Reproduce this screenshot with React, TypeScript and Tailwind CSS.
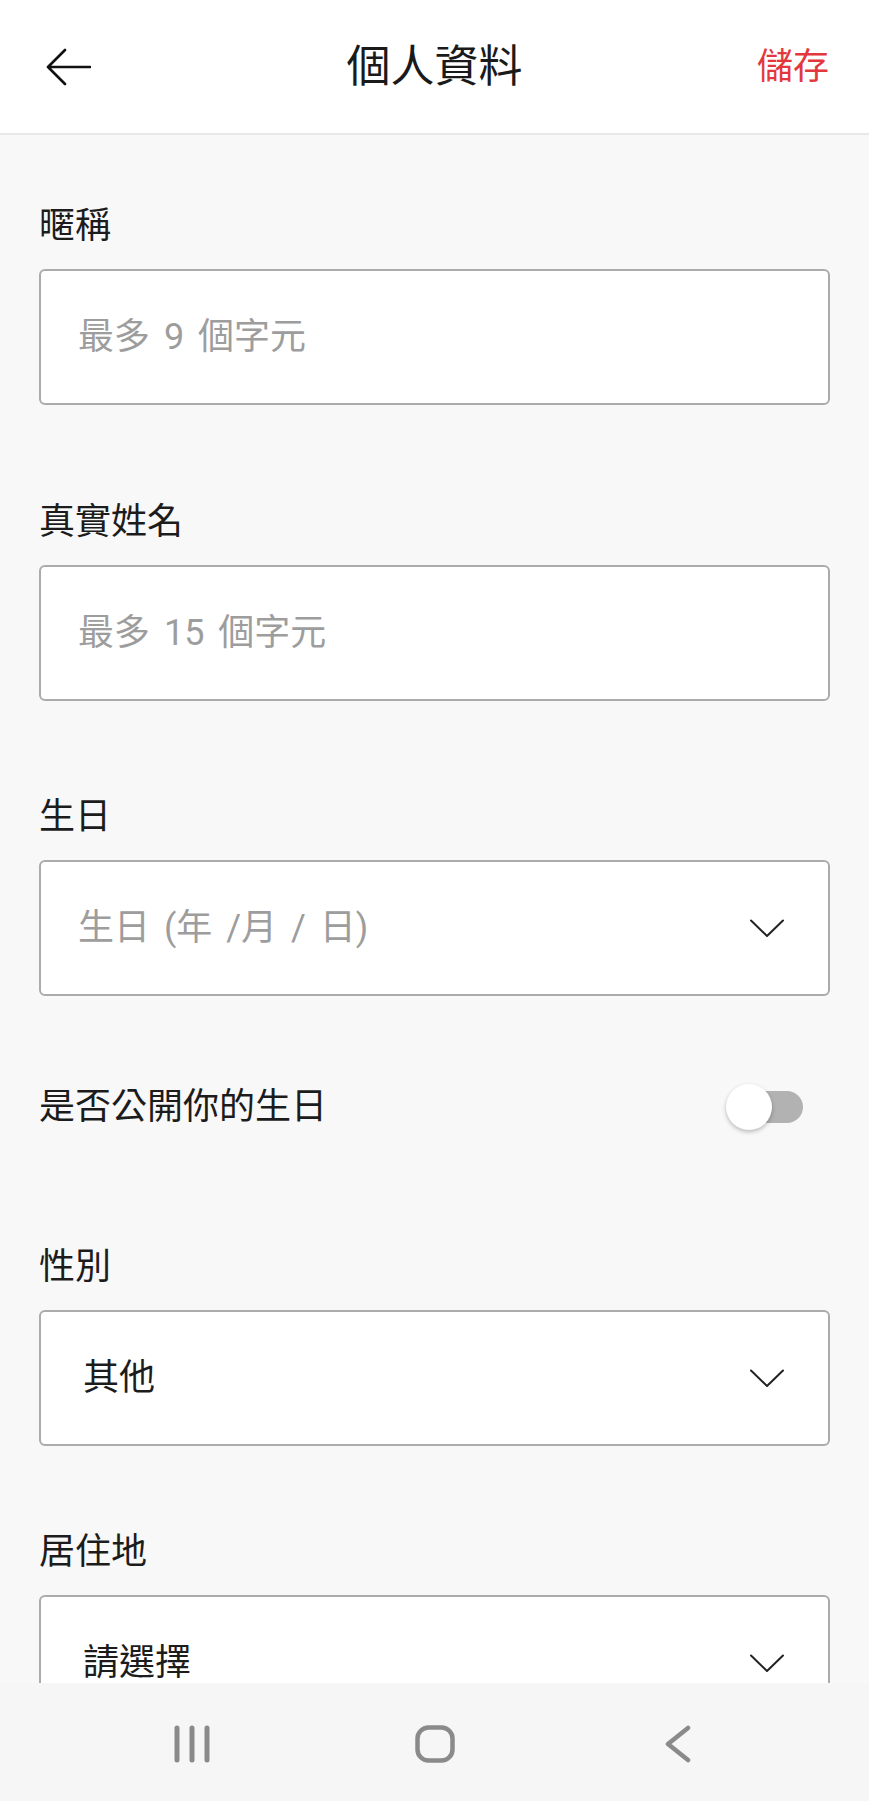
import { ReactNode } from 'react';

const font = "font-['Roboto','Noto_Sans_CJK_TC',sans-serif]";

function Chevron() {
  return (
    <svg width="34" height="19" viewBox="0 0 34 19" fill="none">
      <path d="M1 1.5 L17 17 L33 1.5" stroke="#222" strokeWidth="2" strokeLinecap="round" strokeLinejoin="round" />
    </svg>
  );
}

function Label({ children, className = '' }: { children: ReactNode; className?: string }) {
  return <p className={`h-[50px] text-[36px] leading-[50px] text-[#1c1c1c] ${className}`}>{children}</p>;
}

function TextBox({ placeholder }: { placeholder: string }) {
  return (
    <div className="mt-[18px] flex h-[136px] items-center rounded-[6px] border-2 border-[#ababab] bg-white px-[37px]">
      <span className="text-[36px] text-[#9d9d9d] [word-spacing:5px]">{placeholder}</span>
    </div>
  );
}

function SelectBox({ value, muted }: { value: string; muted?: boolean }) {
  return (
    <div className="mt-[18px] flex h-[136px] items-center justify-between rounded-[6px] border-2 border-[#ababab] bg-white pl-[37px] pr-[44px]">
      <span
        className={
          muted
            ? 'text-[36px] text-[#9d9d9d] [word-spacing:5px]'
            : 'pl-[5px] text-[36px] text-[#1c1c1c]'
        }
      >
        {value}
      </span>
      <Chevron />
    </div>
  );
}

export default function App() {
  return (
    <div className={`flex h-[1801px] w-[869px] flex-col overflow-hidden bg-[#f8f8f8] ${font}`}>
      {/* header */}
      <header className="grid h-[135px] shrink-0 grid-cols-[1fr_auto_1fr] items-center border-b-2 border-[#e8e8e8] bg-white">
        <div className="pl-[46px]">
          <svg width="45" height="38" viewBox="0 0 45 38" fill="none">
            <path d="M2 19 H44 M19 2 L2 19 L19 36" stroke="#111" strokeWidth="2.6" strokeLinecap="round" strokeLinejoin="round" />
          </svg>
        </div>
        <h1 className="text-[44px] leading-none text-[#1a1a1a]">個人資料</h1>
        <div className="flex justify-end pr-[40px]">
          <span className="text-[36px] leading-none text-[#e2383d]">儲存</span>
        </div>
      </header>

      {/* form */}
      <main className="flex-1 overflow-hidden px-[39px]">
        <Label className="mt-[66px]">暱稱</Label>
        <TextBox placeholder="最多 9 個字元" />

        <Label className="mt-[92px]">真實姓名</Label>
        <TextBox placeholder="最多 15 個字元" />

        <Label className="mt-[91px]">生日</Label>
        <SelectBox value="生日 (年 /月 / 日)" muted />

        <div className="mt-[86px] flex h-[50px] items-center justify-between">
          <span className="text-[36px] leading-[50px] text-[#1c1c1c]">是否公開你的生日</span>
          <div className="relative mr-[27px] h-[46px] w-[77px]">
            <div className="absolute right-0 top-[7px] h-[32px] w-[62px] rounded-full bg-[#b2b2b2]" />
            <div className="absolute left-0 top-0 h-[46px] w-[46px] rounded-full bg-white shadow-[0_2px_4px_rgba(0,0,0,0.25)]" />
          </div>
        </div>

        <Label className="mt-[110px]">性別</Label>
        <SelectBox value="其他" />

        <Label className="mt-[81px]">居住地</Label>
        <SelectBox value="請選擇" />
      </main>

      {/* system nav bar */}
      <nav className="flex h-[118px] shrink-0 items-center justify-center bg-[#f6f6f6] pt-[4px]">
        <div className="flex w-[243px] justify-center">
          <svg width="36" height="38" viewBox="0 0 36 38" fill="none">
            <path d="M3 3 V35 M18 3 V35 M33 3 V35" stroke="#8a8a8a" strokeWidth="5" strokeLinecap="round" />
          </svg>
        </div>
        <div className="flex w-[243px] justify-center">
          <svg width="40" height="38" viewBox="0 0 40 38" fill="none">
            <rect x="2.5" y="2.5" width="35" height="33" rx="11" stroke="#8a8a8a" strokeWidth="4.5" />
          </svg>
        </div>
        <div className="flex w-[243px] justify-center">
          <svg width="26" height="38" viewBox="0 0 26 38" fill="none">
            <path d="M23 3 L3 19 L23 35" stroke="#8a8a8a" strokeWidth="4.5" strokeLinecap="round" strokeLinejoin="round" />
          </svg>
        </div>
      </nav>
    </div>
  );
}
